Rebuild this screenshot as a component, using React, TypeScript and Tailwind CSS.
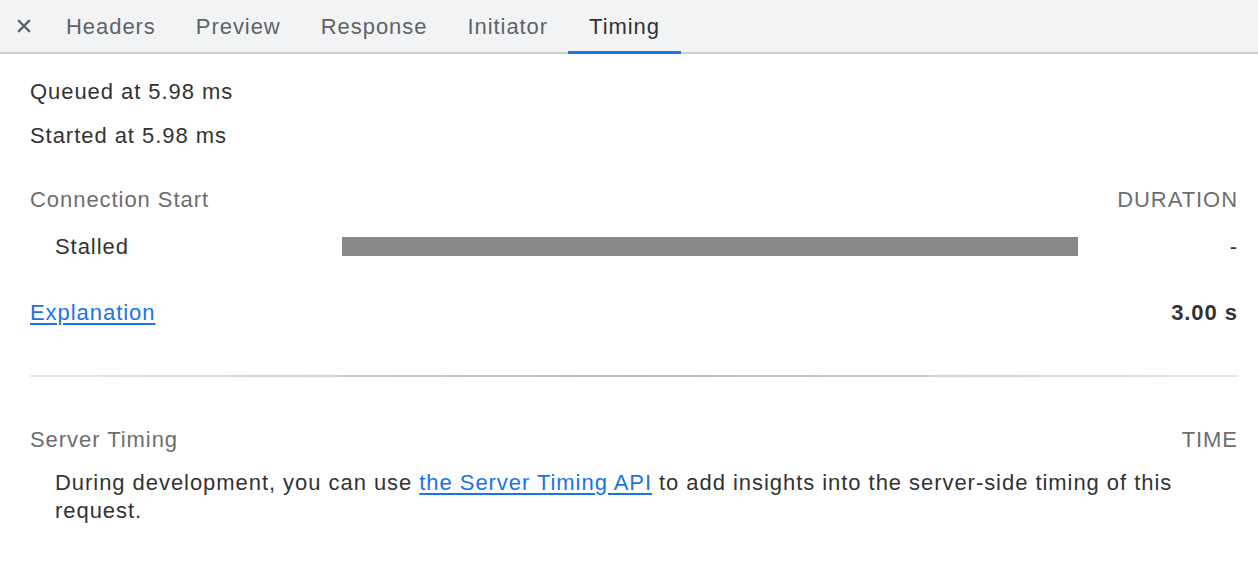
const tabs = ["Headers", "Preview", "Response", "Initiator", "Timing"];
const activeTab = "Timing";

function CloseIcon() {
  return (
    <svg width="14" height="14" viewBox="0 0 14 14" aria-hidden>
      <path d="M2 2L12 12M12 2L2 12" stroke="#5f6368" strokeWidth="2.4" strokeLinecap="square" />
    </svg>
  );
}

function TabBar() {
  return (
    <div className="flex h-[54px] items-stretch border-b-2 border-[#cbcdd1] bg-[#f1f3f4]">
      <button className="flex w-[46px] items-center justify-center pl-[2px]" aria-label="Close">
        <CloseIcon />
      </button>
      {tabs.map((tab) => (
        <div
          key={tab}
          className={
            tab === activeTab
              ? "relative flex items-center px-[21px] text-[#333333]"
              : "relative flex items-center px-[20px] text-[#5f6368]"
          }
        >
          {tab}
          {tab === activeTab && (
            <span aria-hidden className="absolute -bottom-[2px] left-0 right-0 h-[3px] bg-[#1a73e8]" />
          )}
        </div>
      ))}
    </div>
  );
}

export default function App() {
  return (
    <div className="h-[568px] w-[1258px] overflow-hidden bg-white font-['Liberation_Sans',Arial,sans-serif] text-[22px] tracking-[0.95px] text-[#333333]">
      <TabBar />

      <div className="pl-[30px] pr-[20px] pt-[16px]">
        <div className="h-[44px] leading-[44px]">Queued at 5.98 ms</div>
        <div className="h-[44px] leading-[44px]">Started at 5.98 ms</div>

        <div className="mt-[20px] flex h-[44px] items-center justify-between leading-[44px] text-[#6e6e6e]">
          <span>Connection Start</span>
          <span>DURATION</span>
        </div>

        <div className="grid h-[48px] grid-cols-[312px_736px_1fr] items-center">
          <span className="pl-[25px]">Stalled</span>
          <div className="h-[19px] bg-[#888888]" />
          <span className="text-right">-</span>
        </div>

        <div className="mt-[20px] flex h-[44px] items-center justify-between">
          <a href="#" className="text-[#1a73e8] underline underline-offset-[3px]">
            Explanation
          </a>
          <span className="font-bold">3.00 s</span>
        </div>

        <div className="mt-[41px] h-[2px] bg-[linear-gradient(90deg,#e8e8e8_0%,#b8b8b8_50%,#e8e8e8_100%)]" />

        <div className="mt-[40px] flex h-[44px] items-center justify-between text-[#6e6e6e]">
          <span>Server Timing</span>
          <span>TIME</span>
        </div>

        <p className="mt-[8px] pl-[25px] pr-[40px] leading-[28px]">
          During development, you can use{" "}
          <a href="#" className="text-[#1a73e8] underline underline-offset-[3px]">
            the Server Timing API
          </a>{" "}
          to add insights into the server-side timing of this request.
        </p>
      </div>
    </div>
  );
}
